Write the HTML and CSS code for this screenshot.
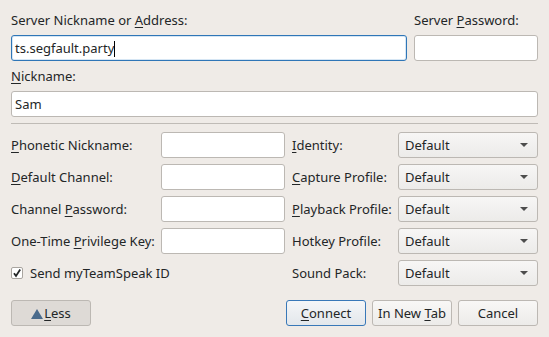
FILE: index.html
```html
<!DOCTYPE html>
<html lang="en">
<head>
    <meta charset="UTF-8">
    <title>Connect</title>
    <link rel="stylesheet" href="styles.css">
</head>
<body>
    <div class="dialog">
        <div class="top-grid">
            <label class="lbl">Server Nickname or <u>A</u>ddress:</label>
            <label class="lbl">Server <u>P</u>assword:</label>
            <div class="field focused">ts.segfault.party<span class="caret"></span></div>
            <div class="field"></div>
        </div>

        <label class="lbl nick-label"><u>N</u>ickname:</label>
        <div class="field">Sam</div>

        <hr class="sep">

        <div class="options">
            <label class="lbl"><u>P</u>honetic Nickname:</label>
            <div class="field"></div>
            <label class="lbl"><u>I</u>dentity:</label>
            <div class="combo"><span>Default</span><span class="arrow"></span></div>

            <label class="lbl"><u>D</u>efault Channel:</label>
            <div class="field"></div>
            <label class="lbl"><u>C</u>apture Profile:</label>
            <div class="combo"><span>Default</span><span class="arrow"></span></div>

            <label class="lbl">Channel <u>P</u>assword:</label>
            <div class="field"></div>
            <label class="lbl"><u>P</u>layback Profile:</label>
            <div class="combo"><span>Default</span><span class="arrow"></span></div>

            <label class="lbl">One-Time <u>P</u>rivilege Key:</label>
            <div class="field"></div>
            <label class="lbl">Hotkey Profile:</label>
            <div class="combo"><span>Default</span><span class="arrow"></span></div>

            <label class="lbl check-row span-2">
                <span class="checkbox">
                    <svg width="10" height="10" viewBox="0 0 10 10"><path d="M2 5.2 L4 8 L8.2 1.6" fill="none" stroke="#232627" stroke-width="1.8"/></svg>
                </span>
                Send myTeamSpeak ID
            </label>
            <label class="lbl">Sound Pack:</label>
            <div class="combo"><span>Default</span><span class="arrow"></span></div>
        </div>

        <div class="buttons">
            <button class="btn less"><span class="up"></span><u>L</u>ess</button>
            <div class="spacer"></div>
            <button class="btn default"><u>C</u>onnect</button>
            <button class="btn">In New <u>T</u>ab</button>
            <button class="btn">Cancel</button>
        </div>
    </div>
</body>
</html>
```

FILE: styles.css
```css
body {
    margin: 0;
    background-color: #efebe7;
    font-family: "Noto Sans", sans-serif;
    font-size: 13px;
    color: #232627;
}
u {
    text-underline-offset: 2px;
}
.dialog {
    width: 549px;
    box-sizing: border-box;
    padding: 11px 11px 0 11px;
}
.lbl {
    display: block;
    line-height: 18px;
    white-space: nowrap;
}
.top-grid {
    display: grid;
    grid-template-columns: 1fr 124px;
    column-gap: 7px;
    row-gap: 6px;
}
.nick-label {
    margin: 6px 0 6px 0;
}
.field {
    height: 26px;
    box-sizing: border-box;
    background: white;
    border: 1px solid #bcb8b3;
    border-radius: 3px;
    padding: 0 3px;
    line-height: 24px;
    white-space: nowrap;
}
.field.focused {
    border-color: #2f76b7;
    box-shadow: inset 0 0 0 1px #d6e6f4;
}
.caret {
    display: inline-block;
    width: 1px;
    height: 16px;
    background: #000;
    vertical-align: -4px;
}
.sep {
    border: none;
    border-top: 1px solid #bfbbb6;
    margin: 6px 0 8px 0;
}
.options {
    display: grid;
    grid-template-columns: 143px 124px 99px 1fr;
    column-gap: 7px;
    row-gap: 6px;
    align-items: center;
}
.span-2 {
    grid-column: span 2;
}
.combo {
    height: 26px;
    box-sizing: border-box;
    border: 1px solid #bcb8b3;
    border-radius: 3px;
    background: linear-gradient(#f7f6f5, #ecebe9);
    padding: 0 7px 0 6px;
    display: flex;
    align-items: center;
    justify-content: space-between;
}
.arrow {
    width: 0;
    height: 0;
    border-left: 4px solid transparent;
    border-right: 4px solid transparent;
    border-top: 4px solid #4d4d4d;
    margin-right: 2px;
}
.check-row {
    display: flex;
    align-items: center;
    gap: 7px;
}
.checkbox {
    width: 12px;
    height: 12px;
    box-sizing: border-box;
    border: 1px solid #a9a5a0;
    border-radius: 2px;
    background: white;
    display: flex;
    align-items: center;
    justify-content: center;
}
.buttons {
    display: flex;
    gap: 6px;
    margin-top: 14px;
}
.spacer {
    flex: 1;
}
.btn {
    height: 26px;
    min-width: 80px;
    padding: 0 4px;
    font-family: inherit;
    font-size: 13px;
    color: #232627;
    border: 1px solid #bcb8b3;
    border-radius: 3px;
    background: linear-gradient(#f8f7f6, #ecebe9);
}
.btn.default {
    border-color: #3878b8;
    background: linear-gradient(#f4f6f8, #e3e7eb);
}
.btn.less {
    background: #dedad6;
}
.up {
    display: inline-block;
    width: 0;
    height: 0;
    border-left: 6px solid transparent;
    border-right: 6px solid transparent;
    border-bottom: 10px solid #4a6b8c;
    margin-right: 1px;
    vertical-align: -1px;
}
```
